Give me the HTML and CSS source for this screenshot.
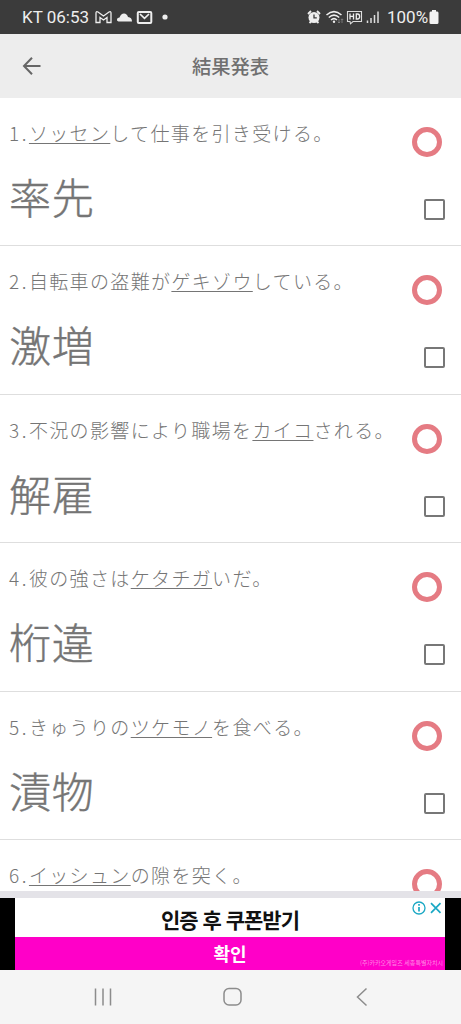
FILE: index.html
```html
<!DOCTYPE html>
<html lang="ja">

<head>
    <title>結果発表</title>
    <meta charset="utf-8">
    <meta name="viewport" content="width=device-width, initial-scale=1">
    <link rel="stylesheet" href="styles.css">
</head>

<body>
    <div class="status">
        <span class="clock">KT 06:53</span>
        <svg class="status-left" width="76" height="16" viewBox="0 0 76 16" fill="none">
            <path d="M1 13.500V4Q1 2 3 3L8.500 7 14 3Q16 2 16 4V13.500H12V8.500L8.500 11 5 8.500V13.500Z" stroke="#eee" stroke-width="1.300" />
            <path d="M23.500 12.500Q21.500 12 22 10 22.500 8.500 24.500 8.500 26 4.500 29 4.500 32 4.500 33 8 37 8.300 37 12.500Z" fill="#eee" />
            <rect x="42.800" y="3" width="13.500" height="11" rx="1" stroke="#eee" stroke-width="2" />
            <path d="M45 5l4.500 4.300 4.500-4.300" stroke="#eee" stroke-width="1.700" />
            <circle cx="70" cy="8" r="2.600" fill="#eee" />
        </svg>
        <svg class="status-right" width="74" height="16" viewBox="0 0 74 16" fill="none">
            <circle cx="7" cy="8.500" r="5.500" fill="#eee" />
            <path d="M1 5l3-3M13 5l-3-3M2.500 14l2-2M11.500 14l-2-2" stroke="#eee" stroke-width="1.800" />
            <path d="M7 5.500v3.300h2.800" stroke="#3b3b3b" stroke-width="1.300" />
            <path d="M19.500 6Q27 -.8 34.500 6M21.800 8.500Q27 3.800 32.200 8.500M24 11Q27 8.300 30 11" stroke="#eee" stroke-width="1.500" />
            <circle cx="27" cy="12.700" r="1.200" fill="#eee" />
            <path d="M32 10v4M30.800 12.800l1.200 1.200 1.200-1.200M35 14v-4M33.800 11l1.200-1.200 1.200 1.200" stroke="#888" stroke-width=".8" />
            <path d="M40.500 2.500h14v10H46l-2.500 2.300-.5-2.300h-2.500z" stroke="#ddd" stroke-width="1.100" />
            <path d="M43 4.500v6M46.500 4.500v6M43 7.400h3.500M49.300 5v5h1.300q2 0 2-2.500t-2-2.500z" stroke="#eee" stroke-width="1.300" />
            <path d="M60.500 11.500v2.500M64 9v5M67.500 6v8M71 2.500v11.500" stroke="#ddd" stroke-width="1.500" />
        </svg>
        <span class="percent">100%</span>
        <svg width="10" height="16" viewBox="0 0 10 16">
            <path d="M3 1h4v1.500h1.300Q9.500 2.500 9.500 4v9.500Q9.500 15 8 15H2Q.5 15 .5 13.500V4Q.5 2.500 1.700 2.500H3z" fill="#f2f2f2" />
        </svg>
    </div>

    <header class="bar">
        <svg class="back" width="20" height="20" viewBox="0 0 20 20" fill="none" stroke="#666" stroke-width="2">
            <path d="M18.500 10H2.500M10 1.800L2 10l8 8.200" />
        </svg>
        <h1>結果発表</h1>
    </header>

    <main class="list">
        <div class="row">
            <div class="texts">
                <p class="question"><span class="num">1.</span><u>ソッセン</u>して仕事を引き受ける。</p>
                <p class="answer">率先</p>
            </div>
            <div class="marks"><span class="circle"></span><span class="check"></span></div>
        </div>
        <div class="row">
            <div class="texts">
                <p class="question"><span class="num">2.</span>自転車の盗難が<u>ゲキゾウ</u>している。</p>
                <p class="answer">激増</p>
            </div>
            <div class="marks"><span class="circle"></span><span class="check"></span></div>
        </div>
        <div class="row">
            <div class="texts">
                <p class="question"><span class="num">3.</span>不況の影響により職場を<u>カイコ</u>される。</p>
                <p class="answer">解雇</p>
            </div>
            <div class="marks"><span class="circle"></span><span class="check"></span></div>
        </div>
        <div class="row">
            <div class="texts">
                <p class="question"><span class="num">4.</span>彼の強さは<u>ケタチガ</u>いだ。</p>
                <p class="answer">桁違</p>
            </div>
            <div class="marks"><span class="circle"></span><span class="check"></span></div>
        </div>
        <div class="row">
            <div class="texts">
                <p class="question"><span class="num">5.</span>きゅうりの<u>ツケモノ</u>を食べる。</p>
                <p class="answer">漬物</p>
            </div>
            <div class="marks"><span class="circle"></span><span class="check"></span></div>
        </div>
        <div class="row">
            <div class="texts">
                <p class="question"><span class="num">6.</span><u>イッシュン</u>の隙を突く。</p>
            </div>
            <div class="marks"><span class="circle"></span></div>
        </div>
    </main>

    <aside class="ad" lang="ko">
        <div class="banner">
            <div class="ad-title">인증 후 쿠폰받기</div>
            <div class="ad-button">확인</div>
            <span class="ad-note">(주)카카오게임즈 세종특별자치시</span>
            <svg class="ad-info" width="32" height="14" viewBox="0 0 32 14" fill="none" stroke="#1ba8c4" stroke-width="1.300">
                <circle cx="7" cy="7" r="6" />
                <path d="M7 6v4.500M7 3v1.700" stroke-width="1.700" />
                <path d="M19 2.200l9.500 9.600M28.500 2.200L19 11.800" stroke-width="1.700" />
            </svg>
        </div>
    </aside>

    <nav class="nav">
        <svg width="20" height="20" viewBox="0 0 20 20" fill="none" stroke="#8c8c8c" stroke-width="1.500">
            <path d="M2.500 1.500v17M10 1.500v17M17.500 1.500v17" />
        </svg>
        <svg width="20" height="20" viewBox="0 0 20 20" fill="none" stroke="#8c8c8c" stroke-width="1.500">
            <rect x="1" y="1.500" width="17" height="16.500" rx="5" />
        </svg>
        <svg width="20" height="20" viewBox="0 0 20 20" fill="none" stroke="#8c8c8c" stroke-width="1.500">
            <path d="M14.500 1.500L5.500 10l9 8.500" />
        </svg>
    </nav>
</body>

</html>
```
FILE: styles.css
```css
body {
    margin: 0;
    height: 1024px;
    display: flex;
    flex-direction: column;
    overflow: hidden;
    background-color: #fff;
    color: #757575;
    font-family: "Noto Sans CJK JP", sans-serif;
}

h1,
p {
    margin: 0;
}

.status {
    height: 34px;
    box-sizing: border-box;
    padding: 0 22px;
    display: flex;
    align-items: center;
    background-color: #3b3b3b;
    color: #eee;
    font-family: Roboto, sans-serif;
    font-size: 17px;
}

.clock {
    width: 68px;
    white-space: nowrap;
}

.status-left {
    margin-left: 5px;
}

.status-right {
    margin-left: auto;
}

.percent {
    margin: 0 1px 0 6px;
    width: 41px;
    white-space: nowrap;
}

/* barre de titre */
.bar {
    height: 64px;
    display: grid;
    grid-template-columns: 1fr auto 1fr;
    align-items: center;
    background-color: #ededed;
}

.back {
    margin-left: 22px;
}

.bar h1 {
    font-size: 19.300px;
    font-weight: 500;
    line-height: 64px;
    color: #707070;
}

.list {
    height: 793px;
    overflow: hidden;
}

.row {
    height: 148.500px;
    box-sizing: border-box;
    display: flex;
    justify-content: space-between;
    border-bottom: 1px solid #dedede;
}

/* la première ligne commence un peu plus haut */
.row:first-child {
    height: 148px;
}

.texts {
    padding: 21px 0 0 9px;
    white-space: nowrap;
}

.question {
    font-size: 19px;
    font-weight: 300;
    line-height: 28px;
    letter-spacing: 1.350px;
}

.num {
    letter-spacing: 2.500px;
}

.question u {
    text-decoration-thickness: 1px;
    text-underline-offset: 2px;
}

.answer {
    margin-top: 19px;
    font-size: 42px;
    font-weight: 300;
    line-height: 60px;
    letter-spacing: 0.800px;
    -webkit-text-stroke: 0.400px #757575;
}

.marks {
    display: flex;
    flex-direction: column;
    align-items: flex-end;
    gap: 42px;
    padding: 29px 16px 0 0;
}

.circle {
    width: 30px;
    height: 30px;
    box-sizing: border-box;
    margin-right: 3px;
    border: 5px solid #e57b83;
    border-radius: 50%;
}

.check {
    width: 21px;
    height: 21px;
    box-sizing: border-box;
    border: 2px solid #777;
    border-radius: 2px;
}

/* publicité */
.ad {
    height: 79px;
    box-sizing: border-box;
    border-top: 7px solid #e4e3e8;
    padding: 0 16px 0 15px;
    background-color: #000;
    font-family: "Noto Sans CJK KR", sans-serif;
}

.banner {
    position: relative;
    height: 72px;
    background-color: #fff;
    text-align: center;
}

.ad-title {
    height: 39px;
    line-height: 43px;
    font-size: 21px;
    font-weight: 700;
    letter-spacing: -1px;
    color: #111;
}

.ad-button {
    height: 33px;
    line-height: 33px;
    font-size: 18px;
    font-weight: 700;
    background-color: #ff00c8;
    color: #fff;
}

.ad-note {
    position: absolute;
    right: 2px;
    bottom: 3px;
    font-size: 6px;
    line-height: 9px;
    color: #ff8be4;
}

.ad-info {
    position: absolute;
    top: 3px;
    right: 1px;
}

.nav {
    height: 54px;
    display: flex;
    justify-content: space-between;
    align-items: center;
    padding: 0 89px 0 93px;
    background-color: #f5f5f5;
}
```
